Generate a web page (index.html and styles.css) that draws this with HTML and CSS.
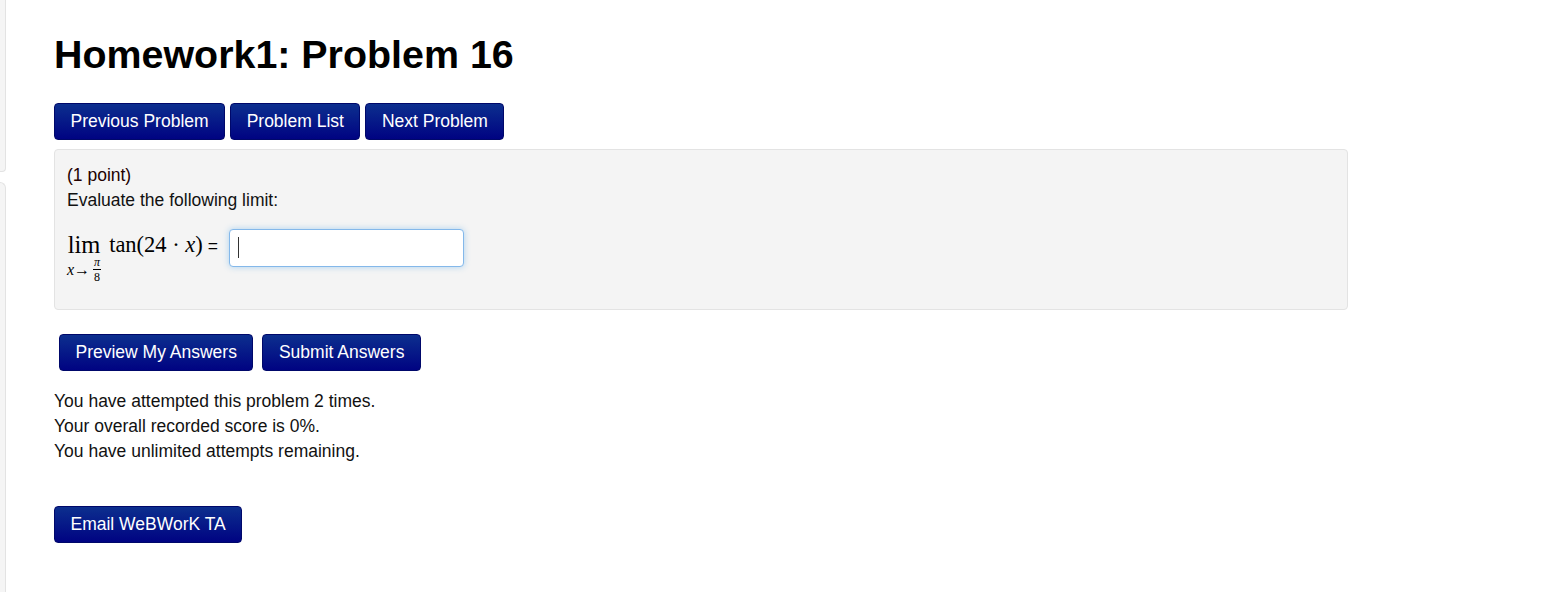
FILE: index.html
```html
<!DOCTYPE html>
<html lang="en">
<head>
  <meta charset="UTF-8">
  <meta name="viewport" content="width=device-width, initial-scale=1.0">
  <title>Homework1: Problem 16</title>
  <link rel="stylesheet" href="styles.css">
</head>
<body>
  <div class="page">
    <div class="sidebar">
      <div class="side-well side-top"></div>
      <div class="side-well side-bottom"></div>
    </div>

    <div class="main">
      <h1 class="title">Homework1: Problem 16</h1>

      <div class="nav-buttons">
        <a class="btn" href="#">Previous Problem</a>
        <a class="btn" href="#">Problem List</a>
        <a class="btn" href="#">Next Problem</a>
      </div>

      <div class="problem">
        <div class="points">(1 point)</div>
        <div>Evaluate the following limit:</div>
        <div class="math-row">
          <span class="limit">
            <span class="lim">lim</span>
            <span class="under">
              <i>x</i>&rarr;<span class="frac"><span class="num"><i>&pi;</i></span><span class="den">8</span></span>
            </span>
          </span>
          <span class="expr">tan(24 &middot; <i>x</i>)</span>
          <span class="equals">=</span>
          <span class="answer-wrap">
            <input type="text" class="answer" id="AnSwEr0001">
            <span class="caret"></span>
          </span>
        </div>
      </div>

      <div class="submit-buttons">
        <button type="button" class="btn">Preview My Answers</button>
        <button type="button" class="btn">Submit Answers</button>
      </div>

      <div class="attempts">
        You have attempted this problem 2 times.<br>
        Your overall recorded score is 0%.<br>
        You have unlimited attempts remaining.
      </div>

      <div class="email">
        <button type="button" class="btn">Email WeBWorK TA</button>
      </div>
    </div>
  </div>
</body>
</html>
```

FILE: styles.css
```css
body {
  font-family: "Liberation Sans", Arial, sans-serif;
  font-size: 17.5px;
  line-height: 25px;
  color: #111;
  background-color: #fff;
  margin: 0;
  padding: 0;
}

.page {
  display: flex;
  min-height: 592px;
}

/* left column, mostly scrolled out of view */
.sidebar {
  width: 6px;
  display: flex;
  flex-direction: column;
  gap: 10px;
}

.side-well {
  background-color: #f5f5f5;
  border: 1px solid #e3e3e3;
  border-left: none;
  box-sizing: border-box;
}

.side-top {
  height: 172px;
  border-top: none;
  border-radius: 0 0 4px 0;
}

.side-bottom {
  flex: 1;
  border-bottom: none;
  border-radius: 0 6px 0 0;
}

.main {
  padding-left: 48px;
  width: 1294px;
}

.title {
  font-size: 39.4px;
  line-height: 50px;
  font-weight: bold;
  color: #000;
  margin: 29px 0 24px;
}

.btn {
  display: inline-block;
  font-family: "Liberation Sans", Arial, sans-serif;
  font-size: 17.5px;
  line-height: 25px;
  color: #fff;
  text-decoration: none;
  padding: 5px 15.5px;
  border: 1px solid #00086a;
  border-radius: 4px;
  background: linear-gradient(to bottom, #0c2f8e, #000382);
  cursor: pointer;
}

.nav-buttons {
  display: flex;
  gap: 5px;
  margin-bottom: 9px;
}

.problem {
  background-color: #f4f4f4;
  border: 1px solid #e3e3e3;
  border-radius: 4px;
  padding: 13px 12px 26px;
}

.points {
  color: #220000;
}

.math-row {
  display: flex;
  align-items: flex-start;
  margin-top: 16px;
  font-family: "Liberation Serif", "Times New Roman", serif;
  font-size: 22.5px;
  line-height: 22px;
  color: #000;
}

.limit {
  display: inline-flex;
  flex-direction: column;
  align-items: center;
  margin-top: 5px;
}

.lim {
  font-size: 24.5px;
  line-height: 22px;
}

.under {
  display: flex;
  align-items: center;
  font-size: 16px;
  line-height: 16px;
  margin-top: 1px;
}

.frac {
  display: inline-flex;
  flex-direction: column;
  align-items: center;
  font-size: 12px;
  line-height: 11px;
  margin-left: 3px;
}

.frac .num {
  border-bottom: 1px solid #000;
  padding: 0 1px 1px;
}

.frac .den {
  padding-top: 2px;
}

.expr {
  margin-left: 8px;
  margin-top: 5px;
}

.equals {
  font-family: "Liberation Sans", Arial, sans-serif;
  font-size: 17.5px;
  line-height: 25px;
  margin: 5px 11px 0 5px;
}

.answer-wrap {
  position: relative;
}

.answer {
  display: block;
  width: 235px;
  height: 38px;
  box-sizing: border-box;
  border: 1px solid #84b8ea;
  border-radius: 4px;
  background: #fff;
  box-shadow: 0 0 6px rgba(82, 168, 236, 0.45);
  outline: none;
  padding: 4px 8px;
  font-size: 17.5px;
}

/* text cursor in the focused answer box */
.caret {
  position: absolute;
  left: 9px;
  top: 8px;
  width: 1px;
  height: 21px;
  background: #333;
}

.submit-buttons {
  display: flex;
  gap: 9px;
  margin: 24px 0 0 5px;
}

.attempts {
  margin-top: 18px;
}

.email {
  margin-top: 42px;
}
```
